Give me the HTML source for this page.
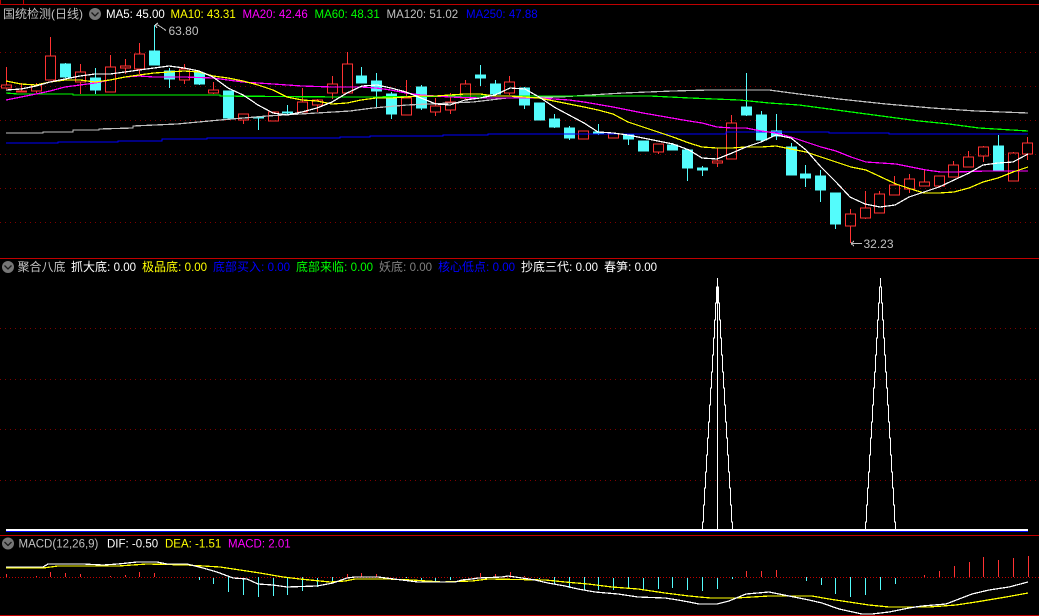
<!DOCTYPE html>
<html><head><meta charset="utf-8">
<style>
html,body{margin:0;padding:0;background:#000;width:1039px;height:616px;overflow:hidden}
svg{position:absolute;left:0;top:0}
text{font-family:"Liberation Sans","Noto Sans CJK SC",sans-serif;font-size:11.5px}
.cn{font-size:12px}
.m polyline{stroke-width:1.25}
</style></head><body>
<svg width="1039" height="616" viewBox="0 0 1039 616" xmlns="http://www.w3.org/2000/svg">
<rect width="1039" height="616" fill="#000"/>
<g shape-rendering="crispEdges" fill="none" class="m">
<path d="M0.5 0V4M23.5 0V4" stroke="#c00000"/>
<path d="M0 4.5H1039M0 258.5H1039M0 535.5H1039M0 615.5H1039" stroke="#c00000"/>
<path d="M0 52.5H1039M0 86.5H1039M0 120.5H1039M0 154.5H1039M0 188.5H1039M0 222.5H1039M0 328.5H1039M0 379.5H1039M0 429.5H1039M0 480.5H1039" stroke="#800000" stroke-dasharray="1 4"/>
<path d="M0 577.5H1039" stroke="#c00000" stroke-dasharray="1 2"/>

<!-- red candles -->
<path stroke="#ff3232" d="M6.5 67V85M6.5 88V89M1.5 85h10v3h-10z
M21.5 83V91M16.5 91h10v1h-10z
M36.5 83V85M36.5 91V93M31.5 85h10v6h-10z
M50.5 37V56M45.5 56h10v24h-10z
M80.5 64V72M80.5 82V94M75.5 72h10v10h-10z
M110.5 55V67M105.5 67h10v25h-10z
M125.5 59V66M125.5 68V74M120.5 66h10v2h-10z
M139.5 43V54M139.5 69V74M134.5 54h10v15h-10z
M184.5 64V69M184.5 80V84M179.5 69h10v11h-10z
M213.5 82V90M213.5 93V94M208.5 90h10v3h-10z
M243.5 120V124M238.5 114h10v6h-10z
M273.5 112h-5v9h10v-9z
M302.5 88V102M297.5 102h10v10h-10z
M317.5 99V100M317.5 105V112M312.5 100h10v5h-10z
M332.5 76V84M332.5 93V99M327.5 84h10v9h-10z
M347.5 52V64M342.5 64h10v29h-10z
M406.5 80V98M401.5 98h10v17h-10z
M435.5 98V106M435.5 112V116M430.5 106h10v6h-10z
M450.5 93V102M450.5 110V114M445.5 102h10v8h-10z
M465.5 80V84M465.5 98V100M460.5 84h10v14h-10z
M509.5 76V82M509.5 93V95M504.5 82h10v11h-10z
M583.5 131h-5v8h10v-8z
M613.5 134h-5v4h10v-4z
M658.5 152V154M653.5 144h10v8h-10z
M717.5 148V161M717.5 163V167M712.5 161h10v2h-10z
M731.5 115V123M726.5 123h10v36h-10z
M850.5 209V214M850.5 226V243M845.5 214h10v12h-10z
M865.5 191V208M865.5 218V219M860.5 208h10v10h-10z
M879.5 191V194M874.5 194h10v19h-10z
M894.5 176V185M889.5 185h10v10h-10z
M909.5 174V179M909.5 189V193M904.5 179h10v10h-10z
M924.5 169V182M919.5 182h10v4h-10z
M939.5 176h-5v10h10v-10z
M953.5 161V165M948.5 165h10v12h-10z
M968.5 151V157M963.5 157h10v10h-10z
M983.5 146V147M983.5 156V162M978.5 147h10v9h-10z
M1013.5 152V153M1008.5 153h10v28h-10z
M1027.5 137V143M1027.5 154V160M1022.5 143h10v11h-10z"/>
<!-- cyan candles -->
<path stroke="#54fcfc" fill="#54fcfc" d="M65.5 63V78M60.5 64h10v13h-10z
M95.5 68V94M90.5 78h10v12h-10z
M154.5 25V65M149.5 51h10v14h-10z
M169.5 68V88M164.5 71h10v8h-10z
M199.5 71V85M194.5 73h10v11h-10z
M228.5 91V120M223.5 91h10v27h-10z
M258.5 117V130M253.5 117h10v1h-10z
M287.5 105V115M282.5 112h10v1h-10z
M361.5 67V83M356.5 76h10v7h-10z
M376.5 73V108M371.5 81h10v10h-10z
M391.5 92V119M386.5 94h10v20h-10z
M421.5 85V110M416.5 87h10v21h-10z
M480.5 65V86M475.5 75h10v3h-10z
M495.5 80V96M490.5 84h10v10h-10z
M524.5 87V109M519.5 88h10v17h-10z
M539.5 103V120M534.5 103h10v17h-10z
M554.5 114V128M549.5 119h10v8h-10z
M569.5 126V140M564.5 128h10v10h-10z
M598.5 124V135M593.5 132h10v1h-10z
M628.5 134V145M623.5 134h10v5h-10z
M643.5 141h-5v10h10v-10z
M672.5 143V150M667.5 145h10v5h-10z
M687.5 150V181M682.5 150h10v18h-10z
M702.5 166V176M697.5 168h10v2h-10z
M746.5 73V116M741.5 107h10v8h-10z
M761.5 111V142M756.5 115h10v25h-10z
M776.5 114V140M771.5 131h10v5h-10z
M791.5 143V175M786.5 147h10v28h-10z
M805.5 165V187M800.5 174h10v4h-10z
M820.5 170V202M815.5 176h10v14h-10z
M835.5 193V229M830.5 193h10v31h-10z
M998.5 135V171M993.5 146h10v25h-10z"/>

<!-- MA lines -->
<polyline stroke="#0000ff" points="6,143 58,143 58,142 118,142 118,141 162,141 162,139 207,139 207,138 340,138 340,137 370,137 370,136 443,136 443,135 488,135 488,134 532,134 726,134 726,132 829,132 829,133 889,133 889,134 1028,134"/>
<polyline stroke="#c0c0c0" points="6,133 43,133 43,132 73,132 73,130 99,130 99,129 133,128 133,126 177,124 220,120 267,116 350,111 373,108 407,105 473,102 507,98 560,97 590,95 623,93 673,91 709,90 769,90 799,94 839,99 886,104 932,108 976,111 1028,113"/>
<polyline stroke="#00ff00" points="6,93 18,94 73,94 73,95 220,95 220,96 340,97 370,97 473,96 560,96 650,96 690,98 739,100 769,103 799,105 829,109 859,113 889,117 919,121 949,124 979,128 1028,131"/>
<polyline stroke="#ff00ff" points="6,100 21,97 36,94 50,91 65,87 80,85 95,83 110,80 125,77 139,76 154,77 184,77 213,78 243,82 273,84 302,86 332,87 361,87 376,88 391,90 406,93 421,95 450,97 480,98 510,98 539,98 569,100 584,102 613,107 643,113 689,121 702,123 717,127 732,128 746,128 761,131 776,133 791,137 806,142 821,147 836,151 851,157 866,162 896,164 911,167 926,170 941,172 956,172 986,171 1028,171"/>
<polyline stroke="#ffff00" points="6,81 21,84 36,85 50,82 65,80 80,80 95,82 110,80 125,77 139,75 154,73 169,72 184,71 199,72 213,76 228,78 243,81 258,85 273,90 287,97 302,100 317,101 332,104 347,103 361,100 376,98 391,98 406,97 421,96 436,96 450,95 465,94 480,94 495,96 510,96 524,97 539,98 554,101 569,104 584,107 598,110 613,114 628,122 643,127 658,132 673,137 689,143 702,147 717,148 732,148 746,147 761,147 776,146 791,149 806,152 821,157 836,162 851,167 866,170 881,177 896,184 911,189 924,193 939,193 954,192 969,188 983,182 998,178 1013,172 1028,167"/>
<polyline stroke="#ffffff" points="6,90 21,89 36,86 50,82 65,79 80,76 95,74 110,74 125,72 139,70 154,68 169,66 184,68 199,71 213,77 228,88 243,95 258,105 273,113 287,115 302,112 317,108 332,102 347,93 362,86 377,85 391,88 406,92 421,98 436,104 450,105 465,100 480,98 495,95 510,88 525,89 539,97 554,107 569,115 584,123 598,132 613,133 628,135 643,138 658,141 673,144 689,150 702,158 717,159 732,153 746,147 761,142 776,135 791,138 806,150 821,167 836,182 850,197 865,204 880,207 895,205 909,197 924,192 939,187 954,180 969,173 983,165 998,163 1013,162 1028,154"/>

<!-- middle pane triangles -->
<g stroke="#fff">
<path d="M702.5 529V522H703.5V505H704.5V488H705.5V472H706.5V455H707.5V438H708.5V422H709.5V405H710.5V388H711.5V372H712.5V355H713.5V338H714.5V320H715.5V303H716.5V287H717.5V278V287H718.5V303H719.5V320H720.5V338H721.5V355H722.5V372H723.5V388H724.5V405H725.5V422H726.5V438H727.5V455H728.5V472H729.5V488H730.5V505H731.5V522H732.5V529"/>
<path d="M865.5 529V522H866.5V505H867.5V488H868.5V472H869.5V455H870.5V438H871.5V422H872.5V405H873.5V388H874.5V372H875.5V355H876.5V338H877.5V320H878.5V303H879.5V287H880.5V278V287H881.5V303H882.5V320H883.5V338H884.5V355H885.5V372H886.5V388H887.5V405H888.5V422H889.5V438H890.5V455H891.5V472H892.5V488H893.5V505H894.5V522H895.5V529"/>
<path d="M717.5 278V529M716.5 287V303M718.5 287V303"/>
</g>
<rect x="6" y="529" width="1022" height="2" fill="#fff" stroke="none"/>
<rect x="6" y="531" width="1022" height="1" fill="#0000ff" stroke="none"/>

<!-- MACD bars -->
<path stroke="#ff3232" d="M6.5 574V577M36.5 576V577M50.5 572V577M65.5 573V577M80.5 574V577M110.5 576V577M125.5 575V577M139.5 572V577M154.5 573V577M347.5 574V578M361.5 573V577M376.5 574V577M480.5 573V577M495.5 574V577M510.5 572V577M524.5 576V577M746.5 571V577M761.5 571V577M776.5 570V577M924.5 575V577M939.5 571V577M954.5 566V577M969.5 562V577M983.5 557V577M998.5 560V577M1013.5 558V577M1028.5 556V577"/>
<path stroke="#54fcfc" d="M199.5 577V580M213.5 578V584M228.5 577V592M243.5 578V595M258.5 577V597M273.5 578V596M287.5 577V595M302.5 577V591M317.5 578V587M332.5 577V581M406.5 577V578M421.5 578V580M435.5 578V581M450.5 577V580M539.5 578V579M554.5 577V584M569.5 577V588M584.5 577V590M598.5 577V590M613.5 578V590M628.5 577V588M643.5 578V590M658.5 577V589M672.5 577V588M687.5 578V590M702.5 577V591M717.5 578V589M732.5 577V579M806.5 577V581M821.5 578V585M835.5 578V594M850.5 577V597M865.5 578V595M880.5 577V590M895.5 578V584"/>
<polyline stroke="#ffff00" points="6,568 43,568 58,566 93,566 118,566 147,564 187,565 220,567 240,570 260,573 283,577 300,579 330,582 345,581 355,579 388,579 412,580 442,582 472,581 488,579 545,580 565,582 588,584 612,587 638,589 665,593 689,596 699,597 711,598 736,598 769,596 812,596 829,599 849,602 869,605 889,607 929,607 956,605 976,602 1006,597 1028,593"/>
<polyline stroke="#ffffff" points="6,567 43,567 48,564 83,564 103,565 118,564 137,562 157,562 167,564 187,564 203,568 217,572 233,578 247,579 258,584 273,585 287,587 317,586 333,583 347,578 355,577 378,577 410,581 418,582 455,582 462,580 472,579 478,578 502,577 508,576 515,577 522,578 535,580 548,583 565,586 578,589 595,592 618,594 638,597 665,598 678,600 689,602 699,604 717,604 729,601 746,594 769,592 789,596 809,600 822,603 839,609 862,614 872,614 889,612 909,608 922,606 946,604 972,594 989,590 1009,587 1028,582"/>
</g>

<!-- price arrows -->
<g fill="none" stroke="#c0c0c0" shape-rendering="crispEdges">
<path d="M155 25H158L166 30.5M155 25L158 23M155 25L157 28"/>
<path d="M851 243.5H862M851 243.5L854 241M851 243.5L854 246"/>
</g>

<!-- toggle icons -->
<g>
<circle cx="95" cy="14" r="6" fill="#767676"/><path d="M91.5 12.5L95 16L98.5 12.5" fill="none" stroke="#1a1a1a" stroke-width="1.3"/>
<circle cx="8" cy="267" r="6" fill="#767676"/><path d="M4.5 265.5L8 269L11.5 265.5" fill="none" stroke="#1a1a1a" stroke-width="1.3"/>
<circle cx="8" cy="543.5" r="6" fill="#767676"/><path d="M4.5 542L8 545.5L11.5 542" fill="none" stroke="#1a1a1a" stroke-width="1.3"/>
</g>

<!-- labels -->
<text class="cn" x="3" y="18" fill="#c0c0c0">国统检测(日线)</text>
<text x="106" y="18" fill="#ffffff">MA5: 45.00</text>
<text x="170.5" y="18" fill="#ffff00">MA10: 43.31</text>
<text x="242.5" y="18" fill="#ff00ff">MA20: 42.46</text>
<text x="314.5" y="18" fill="#00ff00">MA60: 48.31</text>
<text x="386.5" y="18" fill="#c0c0c0">MA120: 51.02</text>
<text x="466" y="18" fill="#0000ff">MA250: 47.88</text>
<text x="168.5" y="35" fill="#c0c0c0" style="font-size:12px">63.80</text>
<text x="863.5" y="248" fill="#c0c0c0" style="font-size:12px">32.23</text>

<text class="cn" x="17.5" y="271" fill="#c0c0c0">聚合八底</text>
<text class="cn" x="71" y="271" fill="#ffffff">抓大底: <tspan style="font-size:11.5px">0.00</tspan></text>
<text class="cn" x="142" y="271" fill="#ffff00">极品底: <tspan style="font-size:11.5px">0.00</tspan></text>
<text class="cn" x="213" y="271" fill="#0000ff">底部买入: <tspan style="font-size:11.5px">0.00</tspan></text>
<text class="cn" x="296" y="271" fill="#00ff00">底部来临: <tspan style="font-size:11.5px">0.00</tspan></text>
<text class="cn" x="379" y="271" fill="#808080">妖底: <tspan style="font-size:11.5px">0.00</tspan></text>
<text class="cn" x="438" y="271" fill="#0000ff">核心低点: <tspan style="font-size:11.5px">0.00</tspan></text>
<text class="cn" x="521" y="271" fill="#ffffff">抄底三代: <tspan style="font-size:11.5px">0.00</tspan></text>
<text class="cn" x="604" y="271" fill="#ffffff">春笋: <tspan style="font-size:11.5px">0.00</tspan></text>

<text x="18.5" y="547.5" fill="#c0c0c0">MACD(12,26,9)</text>
<text x="107" y="547.5" fill="#ffffff">DIF: -0.50</text>
<text x="165" y="547.5" fill="#ffff00">DEA: -1.51</text>
<text x="228" y="547.5" fill="#ff00ff">MACD: 2.01</text>
</svg>
</body></html>
